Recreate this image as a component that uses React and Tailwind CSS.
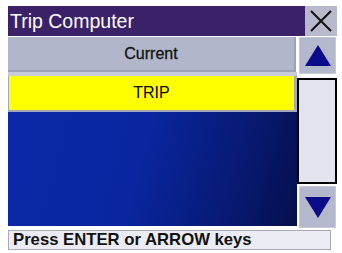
import React from "react";

const Arrow = ({ up }) => (
  <svg width="28" height="23" viewBox="0 0 28 23">
    <polygon points={up ? "14,1 27,22 1,22" : "1,1 27,1 14,22"} fill="#0a0a8a" />
  </svg>
);

const App = () => {
  return (
    <div
      className="w-[342px] h-[253px] bg-white pt-[6px] pl-[8px] overflow-hidden"
      style={{ fontFamily: '"Liberation Sans", Arial, sans-serif' }}>
      <div className="flex w-[329px] h-[30px]">
        <div className="flex-1 bg-[#3b2268] text-white text-[19.5px] leading-[30px] pl-[2px]">
          Trip Computer
        </div>
        <div className="w-[32px] bg-[#b6bacc] flex items-center justify-center">
          <svg width="24" height="24" viewBox="0 0 24 24">
            <path d="M2 2 L22 22 M22 2 L2 22" stroke="#111" strokeWidth="2" />
          </svg>
        </div>
      </div>

      <div className="flex w-[329px] mt-[1px]">
        <div className="w-[289px] flex flex-col">
          <div className="h-[35px] bg-[#b2b6ca] border-r-2 border-b-2 border-[#9ea2b8] flex items-center justify-center text-[16px] text-[#111] mr-[1px] [-webkit-text-stroke:0.3px_#111]">
            Current
          </div>
          <div className="h-[4px] bg-[#c8cbd8]" />
          <div className="h-[36px] bg-[#a4a8bc] pl-[1px] pr-[3px] pb-[2px]">
            <div className="h-full bg-[#ffff00] flex items-center justify-center text-[16px] text-black">
              TRIP
            </div>
          </div>
          <div className="h-[114px] bg-[linear-gradient(105deg,#0a28a8_0%,#0926a0_45%,#07186e_80%,#050f4c_100%)]" />
        </div>
        <div className="w-[40px] flex flex-col">
          <div className="h-[37px] ml-[2px] mr-[1px] bg-[#b4b8cc] border border-[#c6c9d8] flex items-center justify-center">
            <Arrow up />
          </div>
          <div className="h-[4px]" />
          <div className="h-[106px] bg-[#e4e4ee] border-2 border-black" />
          <div className="h-[42px] ml-[2px] mr-[1px] mt-[2px] bg-[#b4b8cc] border border-[#c6c9d8] flex items-center justify-center">
            <Arrow />
          </div>
        </div>
      </div>

      <div className="w-[323px] h-[20px] mt-[2px] bg-[#ececf4] border border-[#a8a8b4] flex items-center pl-[4px] text-[16.7px] font-bold text-[#111]">
        Press ENTER or ARROW keys
      </div>
    </div>
  );
};

export default App;
